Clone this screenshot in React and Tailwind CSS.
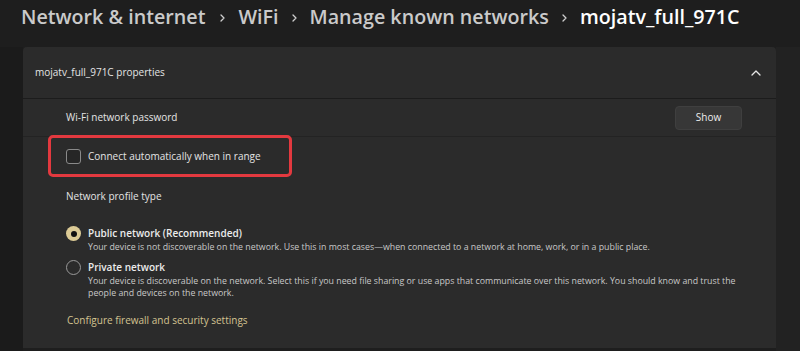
import React from "react";

function Chevron() {
  return (
    <svg width="7" height="10" viewBox="0 0 7 10" className="mt-[2px]">
      <polyline points="2,2 5,5 2,8" fill="none" stroke="#cfcfcf" strokeWidth="1.3" strokeLinecap="round" strokeLinejoin="round" />
    </svg>
  );
}

export default function App() {
  return (
    <div className="w-[800px] h-[351px] overflow-hidden bg-[#1e1e1e] text-[#e4e4e4] font-['Open_Sans',sans-serif]">
      {/* Breadcrumb */}
      <div className="h-[47px] pl-[21px] pt-[3px] flex items-start gap-[12px] text-[19.7px] leading-[28px] font-semibold">
        <span className="text-[#cacaca] mr-[2px]">Network &amp; internet</span>
        <div className="h-[28px] flex items-center"><Chevron /></div>
        <span className="text-[#cacaca]">WiFi</span>
        <div className="h-[28px] flex items-center"><Chevron /></div>
        <span className="text-[#cacaca]">Manage known networks</span>
        <div className="h-[28px] flex items-center"><Chevron /></div>
        <span className="text-white">mojatv_full_971C</span>
      </div>

      <div className="flex h-[304px]">
        <div className="w-[23px] bg-[#1b1b1b]" />
        <div className="w-[753px] flex flex-col">
          {/* Header */}
          <div className="h-[51px] bg-[#2b2b2b] rounded-t-[4px] flex items-center justify-between pl-[12px] pr-[15px] text-[10px]">
            <span>mojatv_full_971C properties</span>
            <svg width="10" height="6" viewBox="0 0 10 6">
              <polyline points="1,5 5,1 9,5" fill="none" stroke="#e6e6e6" strokeWidth="1.3" strokeLinecap="round" strokeLinejoin="round" />
            </svg>
          </div>
          <div className="h-[1px] bg-[#1c1c1c]" />
          {/* Password row */}
          <div className="h-[37px] bg-[#2b2b2b] flex items-center justify-between pl-[43px] pr-[34px] text-[10px]">
            <span>Wi-Fi network password</span>
            <button className="w-[67px] h-[24px] rounded-[4px] bg-[#373737] border border-[#3f3f3f] text-[10px] text-[#ececec]">Show</button>
          </div>
          <div className="h-[1px] bg-[#232323]" />
          {/* Lower section */}
          <div className="flex-1 bg-[#2b2b2b] flex flex-col">
            <div className="-mt-[2px] ml-[25px] w-[244px] h-[42px] border-[3px] border-[#e3393f] rounded-[5px] flex items-center pl-[15px] gap-[7px] text-[10px]">
              <div className="w-[15px] h-[15px] rounded-[3px] border border-[#8a8a8a] bg-[#262626]" />
              <span>Connect automatically when in range</span>
            </div>
            <div className="mt-[12px] pl-[43px] text-[10px] leading-[14px]">Network profile type</div>

            <div className="mt-[24px] pl-[43px] flex gap-[7px]">
              <div className="h-[13px] flex items-center">
                <div className="w-[15px] h-[15px] rounded-full bg-[#dccb96] flex items-center justify-center">
                  <div className="w-[6px] h-[6px] rounded-full bg-[#111]" />
                </div>
              </div>
              <div>
                <div className="text-[10px] leading-[13px] font-semibold text-[#ececec]">Public network (Recommended)</div>
                <div className="text-[8.8px] leading-[12px] text-[#c8c8c8] mt-[1px]">Your device is not discoverable on the network. Use this in most cases—when connected to a network at home, work, or in a public place.</div>
              </div>
            </div>

            <div className="mt-[8px] pl-[43px] flex gap-[7px]">
              <div className="h-[13px] flex items-center">
                <div className="w-[15px] h-[15px] rounded-full border border-[#9a9a9a]" />
              </div>
              <div className="w-[662px]">
                <div className="text-[10px] leading-[13px] font-semibold text-[#ececec]">Private network</div>
                <div className="text-[8.8px] leading-[12px] text-[#c8c8c8] mt-[1px]">Your device is discoverable on the network. Select this if you need file sharing or use apps that communicate over this network. You should know and trust the people and devices on the network.</div>
              </div>
            </div>

            <div className="mt-[14px] pl-[44px] text-[10px] leading-[14px] text-[#d4c391]">Configure firewall and security settings</div>
          </div>
          <div className="h-[3px] bg-[#1e1e1e]" />
        </div>
        <div className="flex-1 bg-[#222222]" />
      </div>
    </div>
  );
}
